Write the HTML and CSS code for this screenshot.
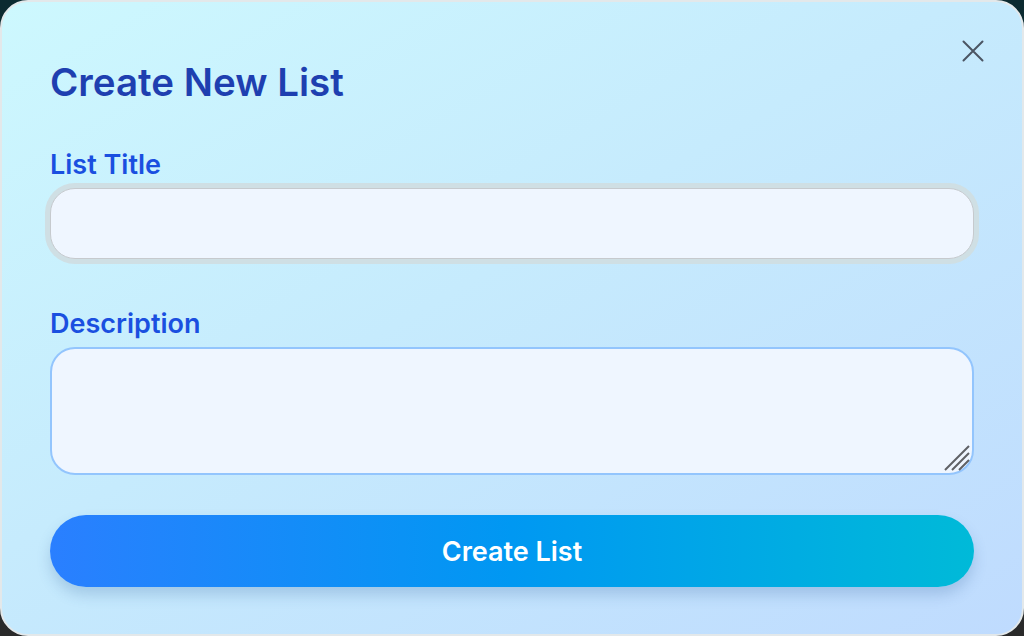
FILE: index.html
```html
<!DOCTYPE html>
<html lang="en">
<head>
<meta charset="utf-8">
<title>Create New List</title>
<link rel="stylesheet" href="styles.css">
</head>
<body>
<div class="modal">
  <button class="close" aria-label="Close">
    <svg width="24" height="24" viewBox="0 0 24 24" fill="none" stroke="currentColor" stroke-width="2" stroke-linecap="round"><path d="M2.5 2.5l19 19M21.5 2.5l-19 19"/></svg>
  </button>
  <h2 class="title">Create New List</h2>
  <form class="form">
    <div class="field">
      <label class="label" for="t">List Title</label>
      <input id="t" class="input" type="text">
    </div>
    <div class="field field-desc">
      <label class="label" for="d">Description</label>
      <div class="area-wrap">
        <textarea id="d" class="textarea"></textarea>
        <svg class="grip" width="26" height="26" viewBox="0 0 26 26" fill="none" stroke="#5f6166" stroke-width="2"><path d="M1 25L25 1M8 25L25 8M15 25L25 15"/></svg>
      </div>
    </div>
    <button type="button" class="submit">Create List</button>
  </form>
</div>
</body>
</html>
```
FILE: styles.css
```css
html, body {
  margin: 0;
  height: 100%;
}
body {
  background: linear-gradient(180deg, #0b2a30 0%, #1c2b2e 60%, #2a2a2a 100%);
  font-family: Inter, "Liberation Sans", sans-serif;
  overflow: hidden;
}
.modal {
  position: relative;
  box-sizing: border-box;
  width: 1024px;
  height: 636px;
  border: 2px solid #e3e8ea;
  border-radius: 28px;
  background: linear-gradient(150deg, #cdf8fe 0%, #c6ebfd 45%, #bfdbfe 100%);
  padding: 56px 48px 0 48px;
  display: flex;
  flex-direction: column;
}
.close {
  position: absolute;
  top: 37px;
  right: 37px;
  width: 24px;
  height: 24px;
  padding: 0;
  border: 0;
  background: none;
  color: #4b5563;
  display: flex;
}
.title {
  margin: 0;
  font-size: 38.5px;
  line-height: 48px;
  font-weight: 600;
  color: #1e3fb0;
}
.form {
  display: flex;
  flex-direction: column;
  margin-top: 42px;
}
.field {
  display: flex;
  flex-direction: column;
}
.field-desc {
  margin-top: 48px;
}
.label {
  font-size: 27px;
  line-height: 34px;
  font-weight: 600;
  color: #1a4fe0;
  margin-bottom: 6px;
}
.input {
  box-sizing: border-box;
  height: 71px;
  border: 1px solid #c6cace;
  border-radius: 25px;
  background: #eff6ff;
  box-shadow: 0 0 0 5px #cfdfe4;
  outline: none;
  font: inherit;
  font-size: 20px;
  padding: 0 20px;
}
.area-wrap {
  position: relative;
  display: flex;
  flex-direction: column;
}
.textarea {
  box-sizing: border-box;
  height: 128px;
  border: 2px solid #93c5fd;
  border-radius: 25px;
  background: #eff6ff;
  outline: none;
  font: inherit;
  font-size: 20px;
  padding: 16px 20px;
  resize: none;
}
.grip {
  position: absolute;
  right: 4px;
  bottom: 4px;
}
.submit {
  margin-top: 40px;
  height: 72px;
  border: 0;
  border-radius: 36px;
  background: linear-gradient(90deg, #2a7fff 0%, #0098f2 50%, #00bad8 100%);
  color: #ffffff;
  font: inherit;
  font-size: 27px;
  font-weight: 600;
  box-shadow: 0 8px 14px rgba(40, 90, 150, 0.22);
}
```
